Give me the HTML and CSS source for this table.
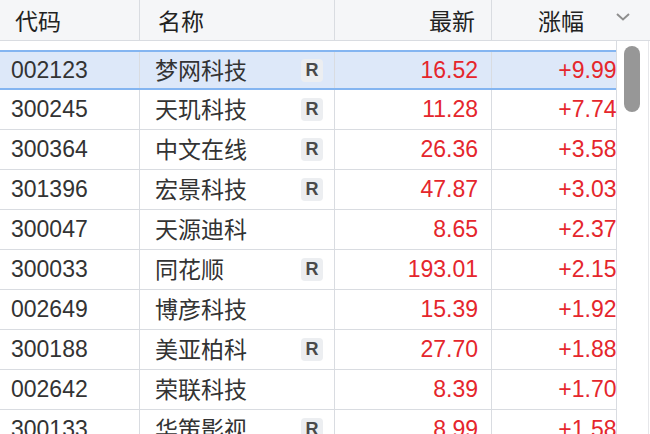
FILE: index.html
```html
<!DOCTYPE html>
<html lang="zh">
<head>
<meta charset="utf-8">
<link rel="stylesheet" href="styles.css">
</head>
<body>
<div class="app">
  <div class="head">
    <div class="hc c1">代码</div>
    <div class="hc c2">名称</div>
    <div class="hc c3">最新</div>
    <div class="hc c4"><span>涨幅</span>
      <svg class="chev" width="14" height="8" viewBox="0 0 14 8"><path d="M1 1 L7 6.5 L13 1" fill="none" stroke="#8e8e8e" stroke-width="2"/></svg>
    </div>
  </div>
  <div class="body">
    <div class="list">
      <div class="row sel"><div class="c c1">002123</div><div class="c c2"><span class="nm">梦网科技</span><span class="badge">R</span></div><div class="c c3 up">16.52</div><div class="c c4 up">+9.99%</div></div>
      <div class="row"><div class="c c1">300245</div><div class="c c2"><span class="nm">天玑科技</span><span class="badge">R</span></div><div class="c c3 up">11.28</div><div class="c c4 up">+7.74%</div></div>
      <div class="row"><div class="c c1">300364</div><div class="c c2"><span class="nm">中文在线</span><span class="badge">R</span></div><div class="c c3 up">26.36</div><div class="c c4 up">+3.58%</div></div>
      <div class="row"><div class="c c1">301396</div><div class="c c2"><span class="nm">宏景科技</span><span class="badge">R</span></div><div class="c c3 up">47.87</div><div class="c c4 up">+3.03%</div></div>
      <div class="row"><div class="c c1">300047</div><div class="c c2"><span class="nm">天源迪科</span></div><div class="c c3 up">8.65</div><div class="c c4 up">+2.37%</div></div>
      <div class="row"><div class="c c1">300033</div><div class="c c2"><span class="nm">同花顺</span><span class="badge">R</span></div><div class="c c3 up">193.01</div><div class="c c4 up">+2.15%</div></div>
      <div class="row"><div class="c c1">002649</div><div class="c c2"><span class="nm">博彦科技</span></div><div class="c c3 up">15.39</div><div class="c c4 up">+1.92%</div></div>
      <div class="row"><div class="c c1">300188</div><div class="c c2"><span class="nm">美亚柏科</span><span class="badge">R</span></div><div class="c c3 up">27.70</div><div class="c c4 up">+1.88%</div></div>
      <div class="row"><div class="c c1">002642</div><div class="c c2"><span class="nm">荣联科技</span></div><div class="c c3 up">8.39</div><div class="c c4 up">+1.70%</div></div>
      <div class="row"><div class="c c1">300133</div><div class="c c2"><span class="nm">华策影视</span><span class="badge">R</span></div><div class="c c3 up">8.99</div><div class="c c4 up">+1.58%</div></div>
    </div>
    <div class="track"><div class="thumb"></div></div>
  </div>
</div>
</body>
</html>
```

FILE: styles.css
```css
html, body {
  margin: 0;
  padding: 0;
  background: #fff;
}
body {
  width: 650px;
  height: 434px;
  overflow: hidden;
  font-family: "Liberation Sans", "Noto Sans CJK SC", sans-serif;
  font-size: 23px;
  color: #333;
}
.app {
  display: flex;
  flex-direction: column;
  height: 434px;
}
.head {
  display: flex;
  height: 40px;
  background: #f5f6f8;
  border-bottom: 1px solid #d9dce1;
  color: #222;
  flex: none;
}
.hc {
  display: flex;
  align-items: center;
  box-sizing: border-box;
  border-right: 1px solid #d9dce1;
}
.head .c1 { width: 140px; padding-left: 15px; }
.head .c2 { width: 195px; padding-left: 18px; }
.head .c3 { width: 157px; justify-content: flex-end; padding-right: 16px; }
.head .c4 { flex: 1; border-right: none; padding-left: 46px; }
.chev { margin-left: auto; margin-right: 20px; margin-bottom: 6px; }

.body {
  display: flex;
  flex: 1;
  min-height: 0;
}
.list {
  width: 616px;
  overflow: hidden;
  padding-top: 9px;
  flex: none;
}
.row {
  display: flex;
  width: 650px;
  height: 40px;
  box-sizing: border-box;
  border-bottom: 1px solid #d9dce1;
}
.row.sel {
  background: #dde8f9;
  border-top: 2px solid #84b5f1;
  border-bottom: 2px solid #84b5f1;
}
.c {
  display: flex;
  align-items: center;
  box-sizing: border-box;
  border-right: 1px solid #d9dce1;
  white-space: nowrap;
}
.row .c1 { width: 140px; padding-left: 11px; }
.row .c2 { width: 195px; padding-left: 15px; padding-right: 11px; }
.nm { margin-bottom: 3px; }
.row .c3 { width: 157px; justify-content: flex-end; padding-right: 13px; }
.row .c4 { width: 158px; justify-content: flex-end; padding-right: 13px; border-right: none; }
.up { color: #e5262c; }
.badge {
  margin-left: auto;
  width: 22px;
  height: 23px;
  border-radius: 4px;
  background: #eceef1;
  color: #4a4a4a;
  font-size: 18px;
  font-weight: 600;
  display: flex;
  align-items: center;
  justify-content: center;
}
.track {
  flex: 1;
  border-left: 1px solid #d9dce1;
  border-right: 1px solid #e6e7ea;
  margin-right: 1px;
  padding-top: 5px;
}
.thumb {
  width: 16px;
  height: 66px;
  margin-left: 7px;
  border-radius: 8px;
  background: #979797;
}
```
